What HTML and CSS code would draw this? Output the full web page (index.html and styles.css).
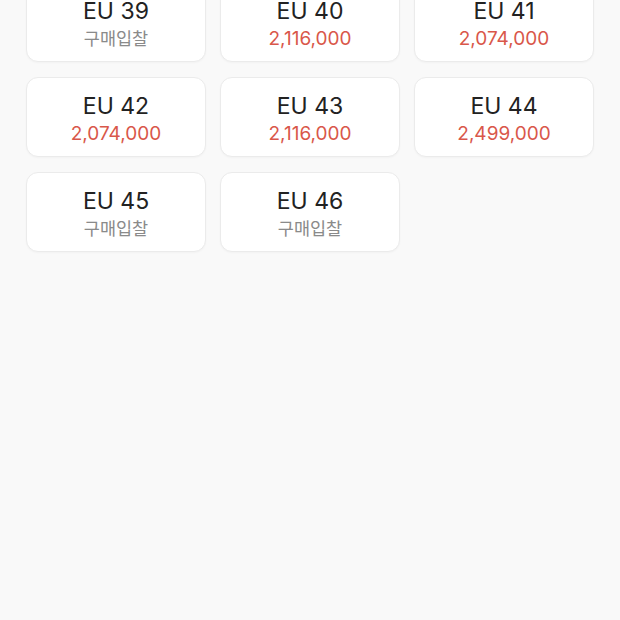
FILE: index.html
```html
<!DOCTYPE html>
<html lang="ko">
<head>
    <meta charset="UTF-8">
    <meta name="viewport" content="width=device-width, initial-scale=1.0">
    <title>Size Select</title>
    <link rel="stylesheet" href="styles.css">
</head>
<body>

    <!-- Size grid -->
    <div class="size-grid">
        <div class="size-card">
            <div class="size">EU 39</div>
            <div class="price empty">구매입찰</div>
        </div>
        <div class="size-card">
            <div class="size">EU 40</div>
            <div class="price">2,116,000</div>
        </div>
        <div class="size-card">
            <div class="size">EU 41</div>
            <div class="price">2,074,000</div>
        </div>
        <div class="size-card">
            <div class="size">EU 42</div>
            <div class="price">2,074,000</div>
        </div>
        <div class="size-card">
            <div class="size">EU 43</div>
            <div class="price">2,116,000</div>
        </div>
        <div class="size-card">
            <div class="size">EU 44</div>
            <div class="price">2,499,000</div>
        </div>
        <div class="size-card">
            <div class="size">EU 45</div>
            <div class="price empty">구매입찰</div>
        </div>
        <div class="size-card">
            <div class="size">EU 46</div>
            <div class="price empty">구매입찰</div>
        </div>
    </div>

</body>
</html>
```

FILE: styles.css
```css
* {
    margin: 0;
    padding: 0;
    box-sizing: border-box;
    font-family: 'Inter', 'Noto Sans CJK KR', sans-serif;
}

body {
    height: 100vh;
    background: #f9f9f9;
    overflow: hidden;
}

/* Size grid (page is scrolled, top row is cut off) */
.size-grid {
    display: grid;
    grid-template-columns: repeat(3, 180px);
    gap: 15px 14px;
    padding: 0 26px;
    margin-top: -18px;
}

.size-card {
    height: 80px;
    background: white;
    border: 1px solid #ebebeb;
    border-radius: 12px;
    box-shadow: 0 1px 2px rgba(0, 0, 0, 0.03);
    display: flex;
    flex-direction: column;
    justify-content: center;
    align-items: center;
    padding-top: 5px;
}

.size {
    font-size: 23px;
    line-height: 28px;
    color: #222;
}

.price {
    font-size: 19px;
    line-height: 28px;
    color: #d9574a;
}

.price.empty {
    font-size: 17.5px;
    color: #8a8a8a;
}
```
